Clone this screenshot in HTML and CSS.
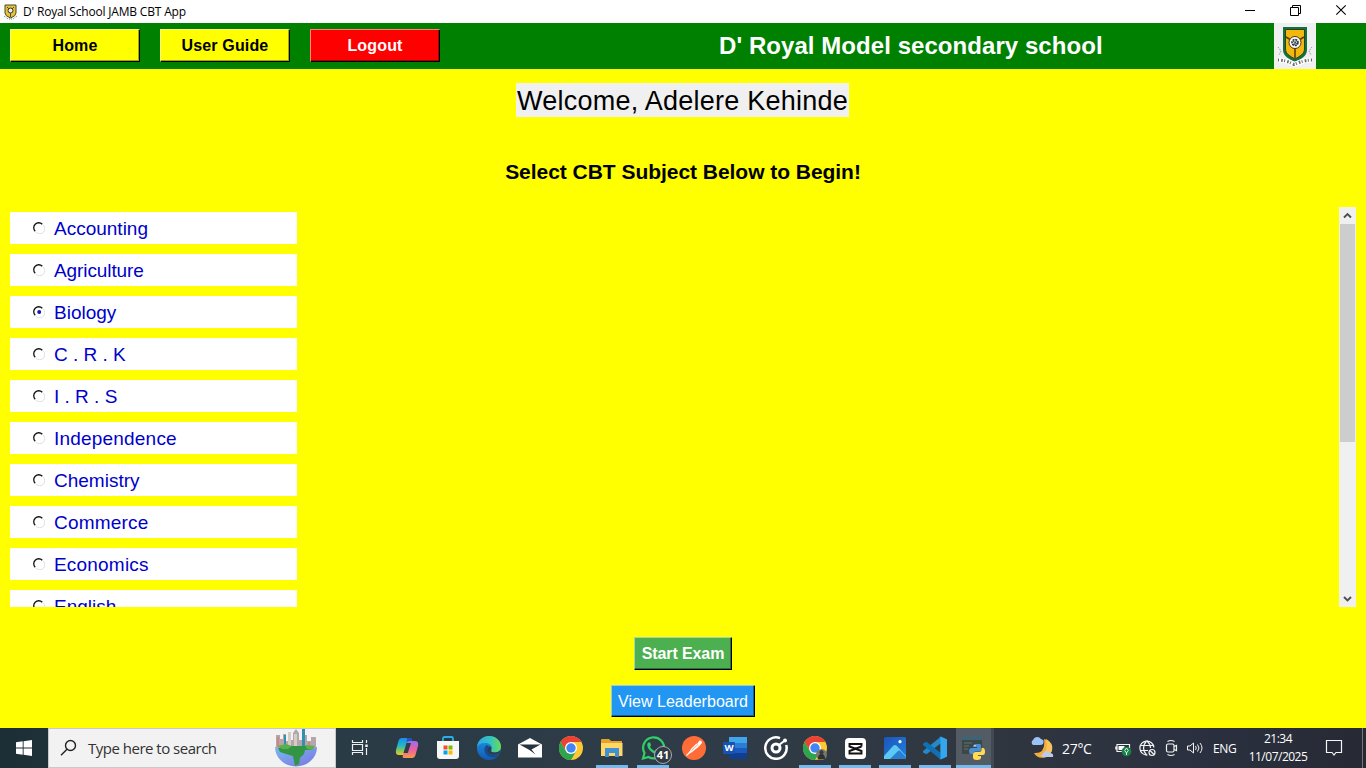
FILE: index.html
```html
<!DOCTYPE html>
<html lang="en">
<head>
<meta charset="utf-8">
<title>D' Royal School JAMB CBT App</title>
<link rel="stylesheet" href="styles.css">
</head>
<body>
<svg class="defs" width="0" height="0" aria-hidden="true">
  <defs>
    <linearGradient id="cpA" x1="0" y1="0" x2="0" y2="1"><stop offset="0" stop-color="#1a8df0"/><stop offset=".45" stop-color="#22b7c4"/><stop offset=".75" stop-color="#8fc653"/><stop offset="1" stop-color="#f6c42c"/></linearGradient>
    <linearGradient id="cpB" x1="0" y1="0" x2="0" y2="1"><stop offset="0" stop-color="#9a6df0"/><stop offset=".5" stop-color="#ec5fa0"/><stop offset="1" stop-color="#f99a4e"/></linearGradient>
    <linearGradient id="edA" x1="0" y1="0" x2="1" y2="0"><stop offset="0" stop-color="#2ba7e8"/><stop offset=".55" stop-color="#35c3c0"/><stop offset="1" stop-color="#67dc54"/></linearGradient>
    <linearGradient id="edB" x1="0" y1="0" x2="0" y2="1"><stop offset="0" stop-color="#1a9be8"/><stop offset="1" stop-color="#1458b0"/></linearGradient>
    <linearGradient id="phA" x1="0" y1="0" x2="1" y2="1"><stop offset="0" stop-color="#1b56b8"/><stop offset="1" stop-color="#2280dd"/></linearGradient>
    <linearGradient id="gl" x1="0" y1="0" x2="1" y2="1"><stop offset="0" stop-color="#79b8ef"/><stop offset="1" stop-color="#7b76e0"/></linearGradient>
    <symbol id="crest" viewBox="0 0 42 46">
      <path d="M9 4H33V27C33 33 27 36 21 39C15 36 9 33 9 27Z" fill="#14703f"/>
      <path d="M11.500 6.500H30.500V26C30.500 31 26 33 21 36C16 33 11.500 31 11.500 26Z" fill="#f3b70d" stroke="#29431f" stroke-width="1"/>
      <path d="M12 14L17 17M30 14L25 17M21 24V35" stroke="#5b390a" stroke-width="1.500"/>
      <circle cx="21" cy="19.500" r="6" fill="#fff" stroke="#473514" stroke-width="1"/>
      <circle cx="21" cy="19.500" r="3" fill="#ccd4d6" stroke="#26353e" stroke-width="1.600" stroke-dasharray="2 .8"/>
      <path d="M19 18L23 21M22.500 17.500L20 22" stroke="#26353e" stroke-width=".8"/>
      <path d="M4 24L7 28L5 32M38 24L35 28L37 32" fill="none" stroke="#999" stroke-width="1" stroke-dasharray="1.500 1"/>
      <path d="M4 37Q12 37 20 41.500Q30 37 38 37" fill="none" stroke="#fff" stroke-width="5"/>
      <path d="M4 37Q12 37 20 41.500Q30 37 38 37" fill="none" stroke="#666" stroke-width="3" stroke-dasharray="1 2.200 1.600 1.400"/>
    </symbol>
    <symbol id="chrome" viewBox="0 0 24 24">
      <circle cx="12" cy="12" r="12" fill="#fcc934"/>
      <path d="M12 6H22.400A12 12 0 0 0 1.600 6L6.800 15Z" fill="#ea4335"/>
      <path d="M1.600 6A12 12 0 0 0 12 24L17.200 15H6.800Z" fill="#2da44e"/>
      <circle cx="12" cy="12" r="6" fill="#fff"/><circle cx="12" cy="12" r="4.700" fill="#4285f4"/>
    </symbol>
    <symbol id="radio" viewBox="0 0 12 12">
      <path d="M2.200 9.300A4.900 4.900 0 0 1 9.300 2.200" fill="none" stroke="#111" stroke-width="1.300"/>
      <path d="M10.300 3A5 5 0 0 1 3 10.300" fill="none" stroke="#ddd" stroke-width="1"/>
    </symbol>
  </defs>
</svg>
<div class="window">
  <div class="titlebar">
    <svg class="title-icon" viewBox="0 0 13 16"><path d="M1 1H12V9Q12 12 6.500 14Q1 12 1 9Z" fill="#e9c23c" stroke="#3f4a26"/><circle cx="6.500" cy="6.500" r="2.500" fill="#eee" stroke="#333"/><path d="M3 3L5 5M10 3L8 5M6.500 9V13" stroke="#5b4a16"/><path d="M0 12L4 15H9L13 12" fill="none" stroke="#668a77" stroke-dasharray="1 1"/></svg>
    <span class="title-text">D' Royal School JAMB CBT App</span>
    <svg class="win-controls" width="130" height="23" viewBox="0 0 130 23" fill="none" stroke="#000" stroke-width="1">
      <path d="M9 10.500H19M54.500 7.500H62.500V15.500H54.500ZM56.500 7.500V5.500H64.500V13.500H62.500"/><path d="M100.300 5.300L109.700 14.700M109.700 5.300L100.300 14.700" stroke-width="1.100"/>
    </svg>
  </div>
  <header class="header">
    <button class="btn nav">Home</button>
    <button class="btn nav">User Guide</button>
    <button class="btn nav logout">Logout</button>
    <h1 class="school">D' Royal Model secondary school</h1>
    <svg class="logo"><use href="#crest"/></svg>
  </header>
  <main class="main">
    <p class="welcome">Welcome, Adelere Kehinde</p>
    <h2 class="prompt">Select CBT Subject Below to Begin!</h2>
    <section class="subjects">
      <div class="list">
        <div class="row"><svg class="radio"><use href="#radio"/></svg><span>Accounting</span></div>
        <div class="row tight"><svg class="radio"><use href="#radio"/></svg><span>Agriculture</span></div>
        <div class="row"><svg class="radio"><use href="#radio"/><circle cx="6.200" cy="6" r="2" fill="#1414b8"/></svg><span>Biology</span></div>
        <div class="row"><svg class="radio"><use href="#radio"/></svg><span>C . R . K</span></div>
        <div class="row"><svg class="radio"><use href="#radio"/></svg><span>I . R . S</span></div>
        <div class="row wide"><svg class="radio"><use href="#radio"/></svg><span>Independence</span></div>
        <div class="row"><svg class="radio"><use href="#radio"/></svg><span>Chemistry</span></div>
        <div class="row wide"><svg class="radio"><use href="#radio"/></svg><span>Commerce</span></div>
        <div class="row wide"><svg class="radio"><use href="#radio"/></svg><span>Economics</span></div>
        <div class="row"><svg class="radio"><use href="#radio"/></svg><span>English</span></div>
      </div>
      <div class="scrollbar">
        <svg width="17" height="17" fill="none" stroke="#505050" stroke-width="1.900"><path d="M5 10.500L8.500 7L12 10.500"/></svg>
        <div class="thumb"></div>
        <svg width="17" height="17" fill="none" stroke="#505050" stroke-width="1.900"><path d="M5 7L8.500 10.500L12 7"/></svg>
      </div>
    </section>
    <div class="actions">
      <button class="btn start">Start Exam</button>
      <button class="btn board">View Leaderboard</button>
    </div>
  </main>
  <footer class="taskbar">
    <div class="winkey"><svg width="16" height="16" fill="#fff"><path d="M0 2.300L6.700 1.300V7.500H0ZM7.600 1.200L16 0V7.500H7.600ZM0 8.500H6.700V14.700L0 13.700ZM7.600 8.500H16V16L7.600 14.800Z"/></svg></div>
    <div class="search">
      <svg width="18" height="18" fill="none" stroke="#222" stroke-width="1.400"><circle cx="10.500" cy="6.500" r="5"/><path d="M7 10.200L1 16.200"/></svg>
      <span class="search-text">Type here to search</span>
      <svg class="globe" width="44" height="40" viewBox="0 0 44 40">
        <path d="M1 19H43A21 19.500 0 0 1 1 19Z" fill="url(#gl)"/>
        <path d="M2 19V7H6V11H9V6H12V13H14V4H17V12H19V5L22 1L25 5V12H28V1H31V7H33V13H37V9H42V20H2Z" fill="#b3a7ab"/>
        <path d="M3 9H5V19H3ZM34 14H36V19H34Z" fill="#cf8580"/>
        <path d="M28 1H31V18H28ZM10 7H12V18H10Z" fill="#338eaf"/><path d="M14 4H17V18H14ZM20 6H23V18H20Z" fill="#d6ccc4"/>
        <path d="M4 20L14 18L31 18L40 19L37 22L31 22L30 26L26 30L25 36L21 38L19 28L12 26L6 24Z" fill="#329544"/><path d="M4 18L12 16L18 18L14 21L8 21ZM31 17L41 18L38 22L33 21Z" fill="#58b14a"/>
      </svg>
    </div>
    <div class="app view"><svg width="18" height="18" fill="none" stroke="#eee" stroke-width="1.200"><path d="M1.500 1V3.500H11.500V1M1.500 5.500H11.500V11.500H1.500ZM1.500 16V13.500H11.500V16M15.500 1V4M15.500 9V16"/><path d="M15.500 5.500V8" stroke-width="2.500"/></svg></div>
    <div class="apps">
      <div class="app"><svg viewBox="0 0 24 24">
        <path d="M7 2H15Q17 2 16.300 4.500L13 16Q12 19 9 19H4Q0 19 1 14L3.500 5Q4.300 2 7 2Z" fill="url(#cpA)"/>
        <path d="M16 5H20Q24 5 23 10L20.500 19Q19.700 22 17 22H9Q7 22 8 19L11 9Q12.300 5 16 5Z" fill="url(#cpB)"/>
        <path d="M11.500 7H16L12.800 17H8.500Z" fill="#2f3b47"/><path d="M12 2H15Q17 2 17.500 5H14Q12 5 11.500 7Z" fill="#2454bc"/></svg></div>
      <div class="app"><svg viewBox="0 0 24 24"><path d="M7 6V2.500Q7 1 8.500 1H15.500Q17 1 17 2.500V6" fill="none" stroke="#2baee3" stroke-width="1.800"/><path d="M1 5H23V20Q23 23 20 23H4Q1 23 1 20Z" fill="#f7f7f7"/><path d="M7.500 9.500H11.500V13.500H7.500Z" fill="#f25022"/><path d="M12.500 9.500H16.500V13.500H12.500Z" fill="#7fba00"/><path d="M7.500 14.500H11.500V18.500H7.500Z" fill="#00a4ef"/><path d="M12.500 14.500H16.500V18.500H12.500Z" fill="#ffb900"/></svg></div>
      <div class="app"><svg viewBox="0 0 24 24"><circle cx="12" cy="12" r="12" fill="url(#edB)"/><path d="M0 11C1 4 6 0 12 0C19 0 24 5 24 10.500C24 14.500 21 16.500 17.500 16.500C14.500 16.500 13.500 15.300 14.200 14.200C16 11.500 14 7.500 9.500 7C5 6.500 1.500 8 0 11Z" fill="url(#edA)"/><path d="M9.500 9C5 13 8 21 16 21.500C18.500 21.500 20.700 20.500 22.300 18C19 20 14 19.500 11.800 16.500C10.500 14.700 10.500 12 12 10.500Q11 9 9.500 9Z" fill="#164a91"/><path d="M10.500 14.500Q10.500 11 12.800 10Q15 11.500 14.200 14.200C13.500 15.300 14.500 16.500 17.500 16.500C20.500 16.500 22.500 15.500 23.300 14L22.500 17.500Q20 19 16 18.700Q11 18 10.500 14.500Z" fill="#2f3b47"/></svg></div>
      <div class="app"><svg viewBox="0 0 24 24"><path d="M0 8.500L12 2L24 8.500V21.500H0Z" fill="#fff"/><path d="M1.500 8.500H22.500L13.500 13.500L17.500 18.500L11.500 14Z" fill="#29333d"/></svg></div>
      <div class="app"><svg><use href="#chrome"/></svg></div>
      <div class="app on"><svg viewBox="0 0 24 24"><path d="M1 4Q1 3 2 3H9L11 5H22V20H1Z" fill="#e7a22c"/><path d="M1 7H22.500V20H1Z" fill="#ffd767"/><path d="M5 12H19V21H15V17H9V21H5Z" fill="#3f93d2"/></svg></div>
      <div class="app on wa"><svg viewBox="0 0 24 24"><path d="M2 22.500L3.500 17A10.500 10.500 0 1 1 7.500 21Z" fill="none" stroke="#2fd067" stroke-width="2.200"/><path d="M7 6.800Q8.500 5.500 9.300 7L10 9Q10.100 9.600 9 10.700Q10.500 13.800 13.500 15L15 13.300L18 14.700Q18.500 16 17 17.300C15 19 11.500 17 9 14.500C6.500 12 5.500 8.500 7 6.800Z" fill="#2fd067"/></svg><span class="badge">41</span></div>
      <div class="app"><svg viewBox="0 0 24 24"><circle cx="12" cy="12" r="12" fill="#ff6c37"/><path d="M15 8L17.500 4.500Q20 4 20 7L17 10.500Z" fill="#fff"/><path d="M14.500 7.500L17 10.500L9.500 16.500L6.500 17.200L9 13Z" fill="#fff"/><path d="M4.500 19.500L13 11.500" stroke="#fff" stroke-width="1.200"/><path d="M9.500 14.500L15.500 9" stroke="#ff8a60" stroke-width=".8"/></svg></div>
      <div class="app"><svg viewBox="0 0 24 24"><rect x="6" y="1" width="18" height="22" rx="1.500" fill="#185abd"/><path d="M6 1H24V7H6Z" fill="#41a5ee"/><path d="M6 7H24V12H6Z" fill="#2b7cd3"/><path d="M6 17H24V23H6Z" fill="#103f91"/><rect x="0" y="6" width="12" height="12" rx="1" fill="#1554b5"/><text x="6" y="15.300" text-anchor="middle" class="word-w">W</text></svg></div>
      <div class="app"><svg viewBox="0 0 24 24" fill="none"><path d="M16 2.200A10.700 10.700 0 1 0 22.200 9" stroke="#fff" stroke-width="2.500"/><circle cx="12" cy="12" r="4" stroke="#fff" stroke-width="3"/><path d="M15 9L21.500 4" stroke="#fff" stroke-width="2"/><circle cx="21" cy="4.500" r="2" fill="#fff"/></svg></div>
      <div class="app near on"><svg viewBox="0 0 24 24"><use href="#chrome"/><circle cx="18.500" cy="18.500" r="5.500" fill="#77786f"/><path d="M15 23Q15 18 18.500 18Q22 18 22 23" fill="#30302f"/><circle cx="18.500" cy="16.200" r="2" fill="#3b3833"/></svg></div>
      <div class="app near on"><svg viewBox="0 0 24 24"><rect x="2" y="2" width="21" height="21" rx="4" fill="#fff"/><path d="M18.500 10.500V8H6.500V10.500L18.500 15V17.500H6.500V15L18.500 10.500" fill="none" stroke="#111" stroke-width="1.900"/></svg></div>
      <div class="app near on"><svg viewBox="0 0 24 24"><rect x="1" y="1" width="22" height="22" rx="1.500" fill="url(#phA)"/><path d="M1 20L10 10Q12 8 14 10L23 20V23H1Z" fill="#5cc8f3"/><path d="M7 23L15 15Q16 14 17.200 15L23 21V23Z" fill="#297fd0"/><circle cx="17" cy="5.700" r="1.600" fill="#fff"/></svg></div>
      <div class="app near on"><svg viewBox="0 0 24 24"><path d="M17.500 .5L24 3.500V20.500L17.500 23.500L12 17.800L17.500 16.500V7.500L3.500 18.300L0 16.500V15L15 3Z" fill="#2489ca"/><path d="M0 7.500L3.500 5.700L19 18L17.500 23.500L0 9Z" fill="#1070b3"/><path d="M17.500 .5L24 3.500V20.500L17.500 23.500Z" fill="#35a5ee"/></svg></div>
      <div class="app on active"><svg viewBox="0 0 24 24"><path d="M0 1H20V18H0Z" fill="#3c4848"/><path d="M0 1H20V4H0Z" fill="#3a6578"/><path d="M2 7H10M2 10H7M2 13H6" stroke="#66706c"/><path d="M14.500 8H18Q19 8 19 10V14Q19 15.500 17 15.500H13Q11 15.500 11 18H9Q7 18 7 15Q7 12 9.500 12H15V11H11V10Q11 8 14.500 8Z" fill="#4a8fd0"/><path d="M19.500 12H21Q23 12 23 15.500Q23 19 21 19H16V20H19V21.500Q19 24 15 24Q11 24 11 21.500V18Q11 16 13.500 16H17Q19.500 16 19.500 13.500Z" fill="#ffdb52"/><circle cx="13" cy="9.800" r=".7" fill="#fff"/></svg></div>
    </div>
    <div class="tray">
      <svg width="26" height="24" viewBox="0 0 26 24"><path d="M15 3A9.500 9.500 0 1 1 5 17Q17 18 15 3Z" fill="#f3ad3d"/><path d="M17 3Q25 7 23 15Q20 21 12 20Q20 16 17 3Z" fill="#f8c35c"/><path d="M4 9A3 3 0 0 1 4 4A4.500 4.500 0 0 1 12 3Q16 4 14 8Q13 9 11 9Z" fill="#9bc3f6"/><path d="M14 21Q11 20 14 17.500Q17 13 20.500 17Q25 17 24 21Z" fill="#b8cbed"/></svg>
      <span class="temp">27°C</span>
      <svg class="tray-icons" width="90" height="20" viewBox="0 0 90 20" fill="none" stroke="#f2f2f2" stroke-width="1.200">
        <path d="M2 6.500H14.500V13.500H2ZM.800 8.500V11.500"/><path d="M3.500 8H9.500V12H3.500Z" fill="#fff" stroke="none"/><circle cx="11.500" cy="13.500" r="4.800" fill="#168247" stroke="none"/><path d="M11.500 17V13" stroke-width="1"/><path d="M11.500 10L13.300 12.500L11.500 15L9.700 12.500Z" fill="#168247" stroke-width=".9"/>
        <path d="M32.500 17A7 7 0 1 1 38.900 9.500M25.500 7.500H38M25.500 12.500H33M31.500 3Q25.500 10 31.500 17M32 3Q35.500 6 35.500 10"/><circle cx="37" cy="14.500" r="3"/><path d="M35 12.500L39 16.500"/>
        <rect x="51.500" y="6" width="7.500" height="8" rx="1.500"/><path d="M59 8.500L61.500 7.500V12.500L59 11.500M52.500 3.500Q56 1.500 59.500 3.500M52.500 16.500Q56 18.500 59.500 16.500"/>
        <path d="M72.500 8H75L78.500 5V15L75 12H72.500ZM80.500 8Q82 10 80.500 12M82.500 6.500Q85.500 10 82.500 13.500M85 5Q89 10 85 15" stroke-width="1"/>
      </svg>
      <span class="lang">ENG</span>
      <div class="clock"><span>21:34</span><span>11/07/2025</span></div>
      <svg class="note" width="18" height="18" fill="none" stroke="#f5f5f5" stroke-width="1.200"><path d="M1.500 1.500H16.500V13.500H11L9 16L7 13.500H1.500Z"/></svg>
      <div class="peek"></div>
    </div>
  </footer>
</div>
</body>
</html>
```

FILE: styles.css
```css
* { box-sizing: border-box; }
body { margin: 0; overflow: hidden; font-family: "Liberation Sans", Arial, sans-serif; }
svg { display: block; flex: none; }
h1, h2, p { margin: 0; font-weight: normal; white-space: nowrap; }
.defs { position: absolute; }
.window { width: 1366px; height: 768px; display: flex; flex-direction: column; background: #ffff00; }

.titlebar { height: 23px; background: #fff; display: flex; align-items: center; padding-left: 4px; }
.title-icon { width: 13px; height: 16px; margin-right: 6px; }
.title-text { font: 12px "Open Sans", sans-serif; letter-spacing: -0.18px; color: #000; white-space: nowrap; flex: 1; }

.header { height: 46px; background: #008000; display: flex; align-items: center; padding-left: 10px; }
.btn { border: 0; padding: 0; font-family: inherit; font-size: 16px; white-space: nowrap; box-shadow: inset 1px 1px rgba(255,255,255,.5), inset -1px -1px #000, inset -2px -2px rgba(0,0,0,.35); }
.nav { width: 130px; height: 33px; margin: 0 20px 1px 0; background: #ffff00; color: #000; font-weight: bold; letter-spacing: 0.15px; }
.logout { background: #ff0000; color: #fff; }
.school { flex: 1; padding-left: 259px; font-size: 24px; font-weight: bold; letter-spacing: 0.06px; color: #fff; }
.logo { width: 42px; height: 46px; background: #f0f0f0; margin-right: 50px; }

.main { height: 659px; display: flex; flex-direction: column; align-items: center; padding-top: 14px; }
.welcome { width: 333px; height: 34px; margin-right: 1px; line-height: 36px; background: #f0f0f0; text-align: center; font-size: 27px; letter-spacing: 0.25px; color: #000; }
.prompt { margin-top: 42px; height: 26px; line-height: 26px; font-size: 21px; font-weight: bold; letter-spacing: -0.04px; color: #000; }
.subjects { margin-top: 22px; width: 100%; height: 400px; padding: 0 10px; display: flex; justify-content: space-between; }
.list { height: 400px; padding-top: 5px; display: flex; flex-direction: column; gap: 10px; overflow: hidden; }
.row { flex: none; width: 287px; height: 32px; background: #fff; display: flex; align-items: center; padding-left: 23px; font-size: 19px; color: #0000cd; }
.row span { margin: 1px 0 0 9px; }
.wide { letter-spacing: 0.2px; }
.tight { letter-spacing: -0.1px; }
.radio { width: 12px; height: 12px; }
.scrollbar { width: 17px; height: 400px; background: #f0f0f0; display: flex; flex-direction: column; align-items: center; }
.thumb { width: 15px; height: 218px; background: #cdcdcd; margin-bottom: 148px; }
.actions { margin-top: 30px; display: flex; flex-direction: column; align-items: center; gap: 15px; }
.start { width: 98px; height: 33px; background: #4caf50; color: #fff; font-weight: bold; letter-spacing: -0.1px; }
.board { width: 144px; height: 32px; padding-top: 1px; background: #2196f3; color: #fff; letter-spacing: 0.03px; }

.taskbar { height: 40px; display: flex; font-family: "Open Sans", sans-serif; color: #fff; background: linear-gradient(90deg, #1c2f37 0, #293b45 335px, #2f3c48 700px, #30363f 1000px, #2a303f 1200px, #272a34 100%); }
.winkey { width: 48px; display: flex; align-items: center; justify-content: center; }
.search { width: 288px; background: #f2f2f2; border: 1px solid #c9c9c9; display: flex; align-items: center; padding-left: 11px; color: #333; }
.search-text { font-size: 15px; letter-spacing: -0.5px; margin-left: 10px; width: 186px; white-space: nowrap; }
.app { width: 41px; height: 40px; display: flex; align-items: center; justify-content: center; }
.app > svg { width: 24px; height: 24px; }
.near { width: 40px; }
.view { width: 48px; }
.view > svg { width: 18px; height: 18px; }
.apps { display: flex; margin-left: 2px; }
.apps .near:nth-child(11) { margin-left: -1px; }
.on { background: linear-gradient(#76b9ed, #76b9ed) center bottom / 32px 3px no-repeat; }
.active { width: 35px; margin-left: 1px; background: linear-gradient(#76b9ed, #76b9ed) center bottom / 100% 3px no-repeat #535b65; box-shadow: 3px 0 #414952; }
.wa { position: relative; }
.badge { position: absolute; left: 22px; top: 18px; width: 18px; height: 18px; border: 1px solid #a5adb3; border-radius: 50%; background: #303a42; font: bold 11px/16px "Open Sans", sans-serif; text-align: center; }
.word-w { font: bold 9.500px "Open Sans", sans-serif; fill: #fff; }
.tray { margin-left: auto; display: flex; align-items: center; }
.temp { font-size: 14px; letter-spacing: -0.3px; margin-left: 7px; width: 53px; }
.lang { font-size: 12px; letter-spacing: -0.3px; margin-left: 8px; width: 30px; }
.clock { display: flex; flex-direction: column; align-items: center; width: 70px; font-size: 12px; line-height: 18px; letter-spacing: -0.5px; }
.note { margin-left: 12px; }
.peek { width: 1px; height: 40px; background: #72767d; margin: 0 3px 0 19px; }
```
